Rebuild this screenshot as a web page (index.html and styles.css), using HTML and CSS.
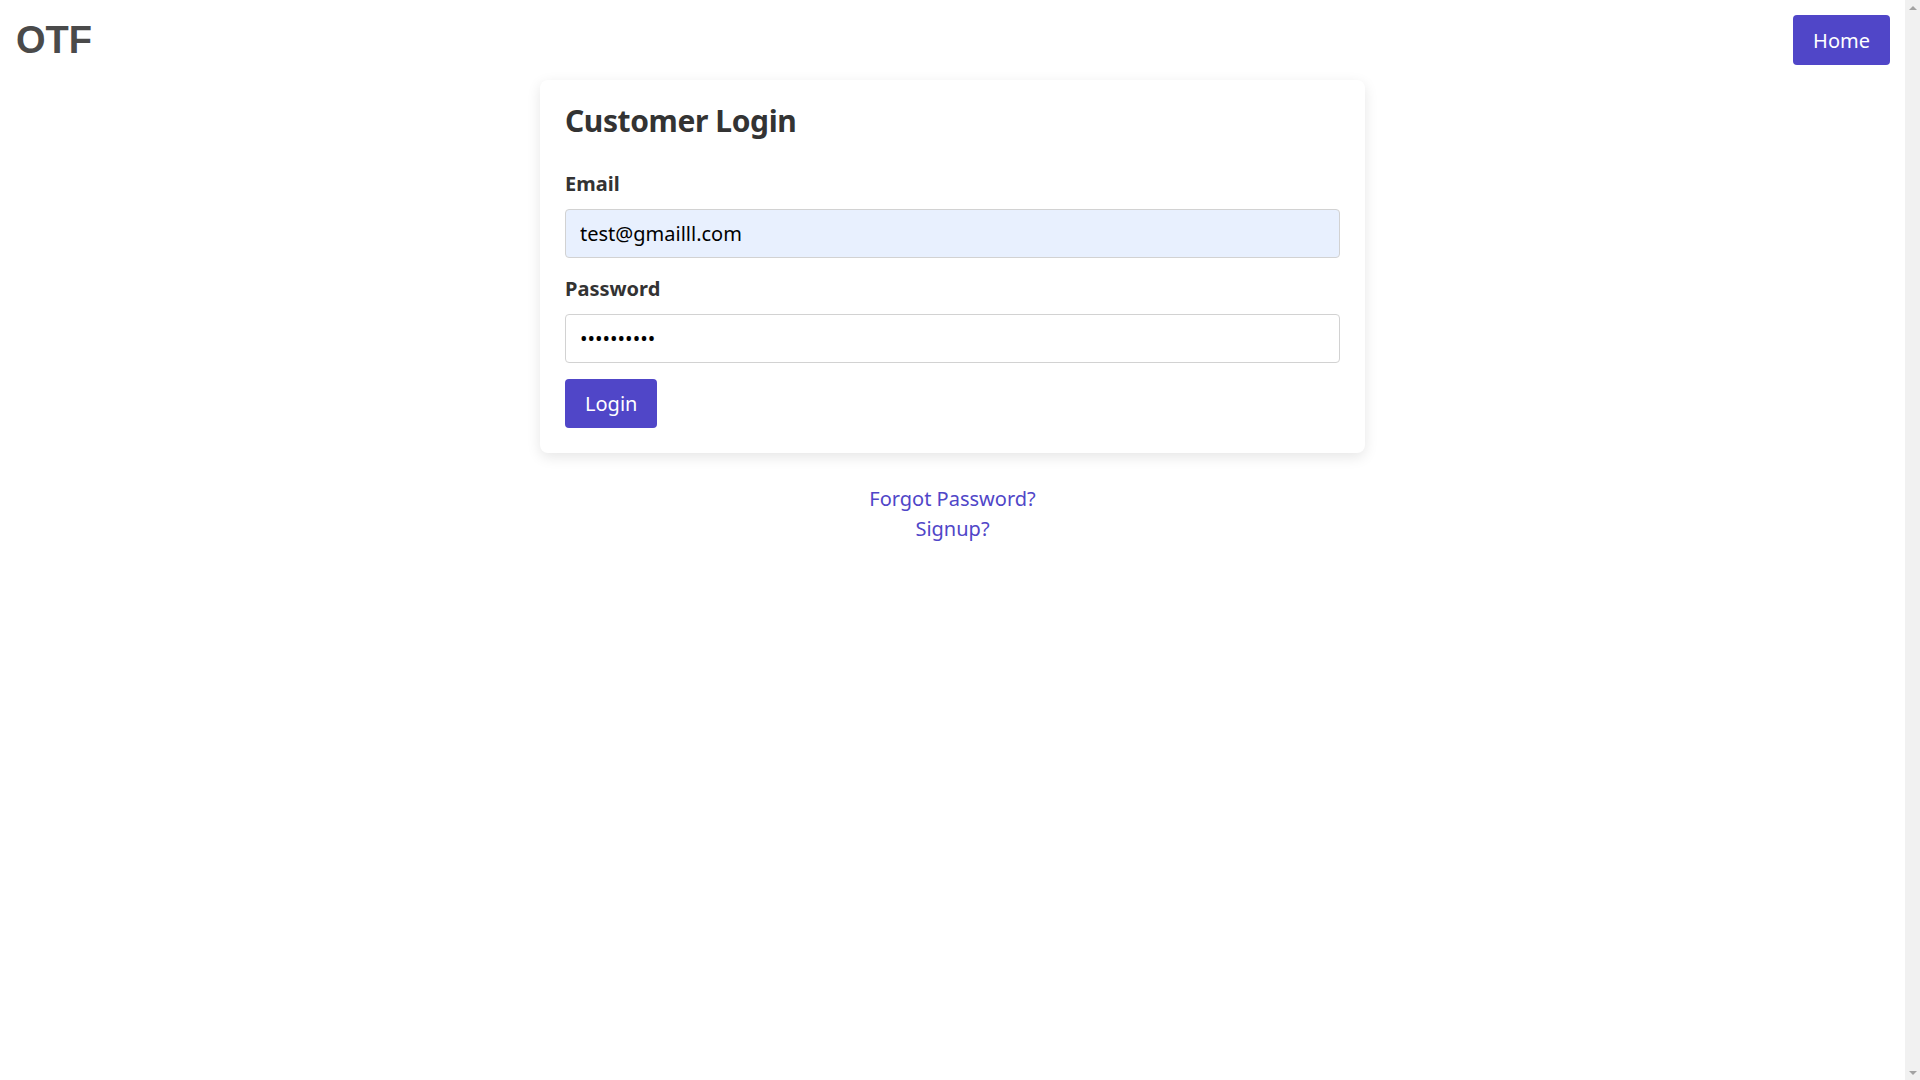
FILE: index.html
```html
<!DOCTYPE html>
<html lang="en">
<head>
<meta charset="utf-8">
<title>Customer Login</title>
<link rel="stylesheet" href="styles.css">
</head>
<body>
<div class="viewport">
  <header class="topbar">
    <div class="brand">OTF</div>
    <a class="btn btn-home" href="#">Home</a>
  </header>
  <main class="page">
    <section class="card">
      <h2 class="card-title">Customer Login</h2>
      <form class="login-form">
        <div class="field">
          <label class="field-label" for="email">Email</label>
          <input class="field-input field-input--filled" id="email" type="email" value="test@gmailll.com">
        </div>
        <div class="field">
          <label class="field-label" for="password">Password</label>
          <input class="field-input" id="password" type="password" value="1234567890">
        </div>
        <button class="btn btn-login" type="button">Login</button>
      </form>
    </section>
    <nav class="links">
      <a class="link" href="#">Forgot Password?</a>
      <a class="link" href="#">Signup?</a>
    </nav>
  </main>
</div>
<div class="scrollbar" aria-hidden="true">
  <span class="arrow arrow-up"></span>
  <span class="arrow arrow-down"></span>
</div>
</body>
</html>
```
FILE: styles.css
```css
* {
  box-sizing: border-box;
}
html,
body {
  height: 100%;
}
body {
  margin: 0;
  display: flex;
  overflow: hidden;
  font-family: "Noto Sans", "Open Sans", sans-serif;
  color: #333;
  background: #fff;
}
.viewport {
  flex: 1;
  min-width: 0;
}
.scrollbar {
  width: 15px;
  height: 100%;
  flex: none;
  background: #f1f1f1;
  display: flex;
  flex-direction: column;
  justify-content: space-between;
  align-items: center;
  padding: 6px 0 5px;
}
.arrow {
  width: 0;
  height: 0;
  border-left: 4px solid transparent;
  border-right: 4px solid transparent;
}
.arrow-up {
  border-bottom: 4px solid #a3a3a3;
}
.arrow-down {
  border-top: 4px solid #a3a3a3;
}
.topbar {
  display: flex;
  justify-content: space-between;
  align-items: center;
  padding: 15px;
  height: 80px;
}
.brand {
  font-family: "Liberation Sans", Arial, sans-serif;
  font-weight: 700;
  font-size: 38px;
  color: #4a4a4a;
  line-height: 1;
  padding-left: 1px;
}
.btn {
  display: inline-flex;
  align-items: center;
  justify-content: center;
  background: #5046c8;
  color: #fff;
  border: none;
  border-radius: 4px;
  font-family: inherit;
  font-size: 20px;
  text-decoration: none;
  cursor: pointer;
}
.btn-home {
  height: 50px;
  padding: 0 20px;
}
.page {
  display: flex;
  flex-direction: column;
  align-items: center;
}
.card {
  width: 825px;
  padding: 25px;
  background: #fff;
  border-radius: 8px;
  box-shadow: 0 4px 14px rgba(0, 0, 0, 0.1);
}
.card-title {
  margin: 0 0 34px;
  font-size: 30px;
  line-height: 32px;
  font-weight: 700;
  letter-spacing: -0.4px;
  color: #333;
}
.field {
  margin-bottom: 18px;
}
.field-label {
  display: block;
  font-size: 20px;
  line-height: 24px;
  font-weight: 700;
  padding-top: 1px;
  margin-bottom: 13px;
}
.field-input {
  display: block;
  width: 100%;
  height: 49px;
  padding: 0 14px;
  border: 1px solid #d2d2d2;
  border-radius: 4px;
  font-family: inherit;
  font-size: 20px;
  color: #000;
  background: #fff;
}
.field-input--filled {
  background: #e8f0fe;
}
.login-form .field:last-of-type {
  margin-bottom: 16px;
}
.btn-login {
  height: 49px;
  padding: 0 20px;
}
.links {
  margin-top: 31px;
  display: flex;
  flex-direction: column;
  align-items: center;
}
.link {
  font-size: 20px;
  line-height: 30px;
  color: #5046c8;
  text-decoration: none;
}
```
